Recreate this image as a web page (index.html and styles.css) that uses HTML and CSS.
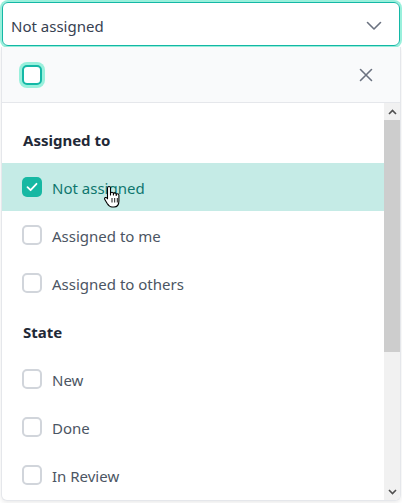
FILE: index.html
```html
<!DOCTYPE html>
<html lang="en">
<head>
<meta charset="utf-8">
<title>Filter</title>
<link rel="stylesheet" href="styles.css">
</head>
<body>
<div class="wrap">
  <div class="select">
    <span class="select-value">Not assigned</span>
    <svg class="chev" width="16" height="10" viewBox="0 0 16 10"><path d="M1.5 1.5 L8 8 L14.5 1.5" fill="none" stroke="#6b7280" stroke-width="1.6" stroke-linecap="round" stroke-linejoin="round"/></svg>
  </div>
  <div class="panel">
    <div class="panel-head">
      <span class="cb cb-focus"></span>
      <svg class="close" width="14" height="14" viewBox="0 0 14 14"><path d="M1.5 1.5 L12.5 12.5 M12.5 1.5 L1.5 12.5" fill="none" stroke="#6b7280" stroke-width="1.6" stroke-linecap="round"/></svg>
    </div>
    <div class="panel-body">
      <div class="list">
        <div class="group">Assigned to</div>
        <div class="item item-selected">
          <span class="cb cb-checked"><svg width="14" height="14" viewBox="0 0 14 14"><path d="M2.5 7.2 L5.6 10.2 L11.5 3.8" fill="none" stroke="#fff" stroke-width="1.8" stroke-linecap="round" stroke-linejoin="round"/></svg></span>
          <span class="label">Not assigned</span>
          <svg class="hand" width="20" height="24" viewBox="0 0 20 24"><path d="M6 1.5 C7 1.5 7.5 2.2 7.5 3 L7.5 10 L7.5 8.5 C7.5 7.7 8.2 7.2 9 7.2 C9.8 7.2 10.4 7.7 10.4 8.5 L10.4 10 L10.4 9.2 C10.4 8.4 11 7.9 11.8 7.9 C12.6 7.9 13.2 8.4 13.2 9.2 L13.2 10.5 L13.2 10 C13.2 9.2 13.8 8.8 14.5 8.8 C15.3 8.8 15.9 9.3 15.9 10.1 L15.9 16 C15.9 19.5 14 22 11 22 L9 22 C6.5 22 5.5 20.5 4.2 18.5 L1.8 14.5 C1.3 13.7 1.6 12.9 2.3 12.6 C3 12.3 3.7 12.6 4.2 13.3 L4.5 13.8 L4.5 3 C4.5 2.2 5 1.5 6 1.5 Z" fill="#fff" stroke="#000" stroke-width="1.1" stroke-linejoin="round"/><path d="M9 13 L9 17.5 M11.7 13 L11.7 17.5 M14.3 13 L14.3 17.5" stroke="#000" stroke-width="0.9"/></svg>
        </div>
        <div class="item"><span class="cb"></span><span class="label">Assigned to me</span></div>
        <div class="item"><span class="cb"></span><span class="label">Assigned to others</span></div>
        <div class="group">State</div>
        <div class="item"><span class="cb"></span><span class="label">New</span></div>
        <div class="item"><span class="cb"></span><span class="label">Done</span></div>
        <div class="item"><span class="cb"></span><span class="label">In Review</span></div>
      </div>
      <div class="scrollbar">
        <div class="sb-btn"><svg width="9" height="6" viewBox="0 0 9 6"><path d="M1 5 L4.5 1.5 L8 5" fill="none" stroke="#505050" stroke-width="1.6"/></svg></div>
        <div class="sb-thumb"></div>
        <div class="sb-track"></div>
        <div class="sb-btn"><svg width="9" height="6" viewBox="0 0 9 6"><path d="M1 1 L4.5 4.5 L8 1" fill="none" stroke="#505050" stroke-width="1.6"/></svg></div>
      </div>
    </div>
  </div>
</div>
</body>
</html>
```
FILE: styles.css
```css
html, body {
  margin: 0;
  padding: 0;
  background: #ffffff;
  width: 402px;
  height: 503px;
  overflow: hidden;
  font-family: "Noto Sans", "Open Sans", sans-serif;
}
.wrap {
  display: flex;
  flex-direction: column;
  height: 503px;
}
.select {
  margin: 2px 2px 0 2px;
  border: 1px solid #14b8a6;
  border-radius: 6px;
  box-shadow: 0 0 0 2px #99f0dc;
  display: flex;
  align-items: center;
  justify-content: space-between;
  padding: 3px 17px 0 8px;
  box-sizing: border-box;
  height: 44px;
  flex: none;
}
.select-value {
  font-size: 15px;
  color: #374151;
  padding-top: 1px;
}
.chev { display: block; }
.panel {
  margin: 1px 1px 2px 1px;
  flex: 1;
  min-height: 0;
  border: 1px solid #e5e7eb;
  border-top: none;
  border-radius: 0 0 6px 6px;
  background: #fff;
  box-shadow: 0 2px 4px rgba(0,0,0,0.08);
  display: flex;
  flex-direction: column;
  overflow: hidden;
}
.panel-head {
  flex: none;
  background: #f9fafb;
  border-bottom: 1px solid #e5e7eb;
  display: flex;
  align-items: center;
  justify-content: space-between;
  padding: 1px 27px 0 20px;
  box-sizing: border-box;
  height: 56px;
}
.close { display: block; }
.cb {
  width: 20px;
  height: 20px;
  box-sizing: border-box;
  border: 2px solid #d1d5db;
  border-radius: 5px;
  background: #fff;
  flex: none;
  display: flex;
  align-items: center;
  justify-content: center;
}
.cb-focus {
  border-color: #14b8a6;
  box-shadow: 0 0 0 3px #99f0dc;
}
.cb-checked {
  border: none;
  background: #17b8a3;
}
.cb-checked svg { display: block; }
.panel-body {
  flex: 1;
  min-height: 0;
  display: flex;
}
.list {
  flex: 1;
  min-width: 0;
  padding-top: 12px;
  overflow: hidden;
}
.group {
  height: 48px;
  display: flex;
  align-items: center;
  padding: 2px 0 0 21px;
  box-sizing: border-box;
  font-size: 15px;
  font-weight: 700;
  color: #1f2937;
}
.item {
  height: 48px;
  display: flex;
  align-items: center;
  gap: 10px;
  padding-left: 20px;
  font-size: 15px;
  color: #4b5563;
  position: relative;
}
.label {
  padding-top: 1px;
}
.item-selected {
  background: #c5ebe6;
  color: #0f766e;
}
.hand {
  position: absolute;
  left: 101px;
  top: 22px;
}
.scrollbar {
  width: 16px;
  flex: none;
  display: flex;
  flex-direction: column;
  background: #f1f1f1;
}
.sb-btn {
  height: 17px;
  flex: none;
  display: flex;
  align-items: center;
  justify-content: center;
}
.sb-thumb {
  height: 232px;
  flex: none;
  background: #cdcdcd;
}
.sb-track { flex: 1; }
```
